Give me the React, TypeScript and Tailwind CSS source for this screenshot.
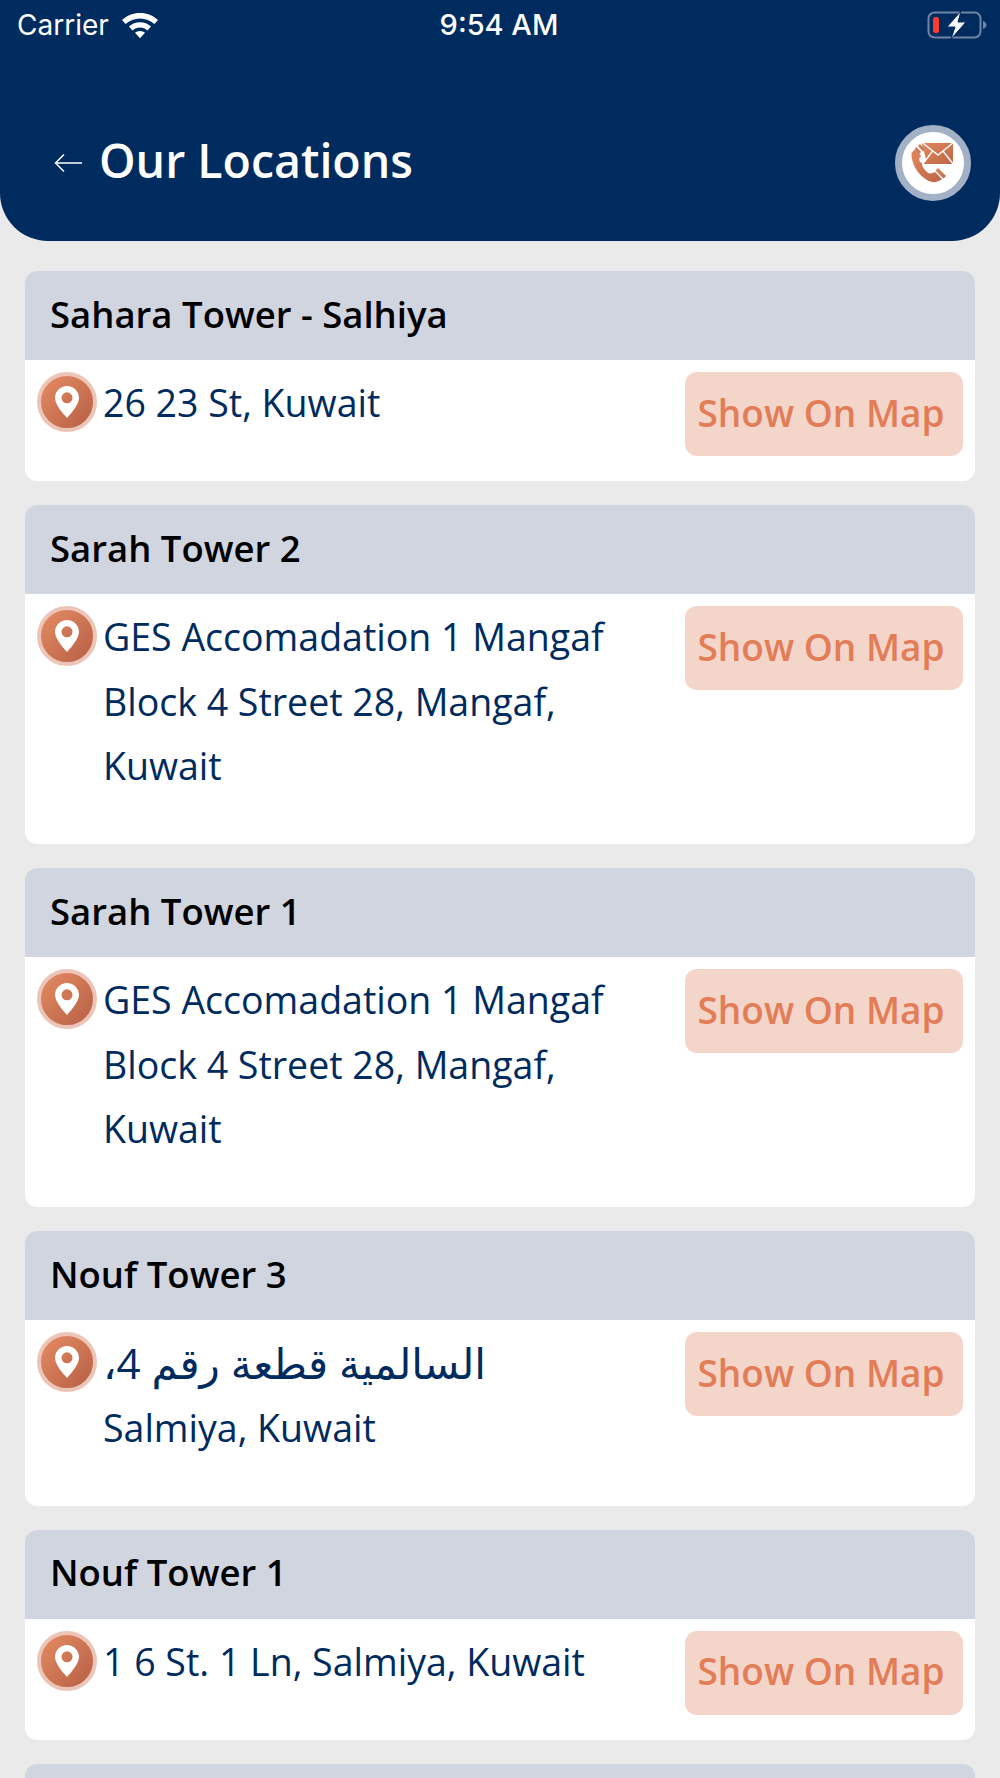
const locations = [
  { id: 1, name: "Sahara Tower - Salhiya", address: ["26 23 St, Kuwait"] },
  { id: 2, name: "Sarah Tower 2", address: ["GES Accomadation 1 Mangaf", "Block 4 Street 28, Mangaf,", "Kuwait"] },
  { id: 3, name: "Sarah Tower 1", address: ["GES Accomadation 1 Mangaf", "Block 4 Street 28, Mangaf,", "Kuwait"] },
  { id: 4, name: "Nouf Tower 3", arabic: "\u0627\u0644\u0633\u0627\u0644\u0645\u064A\u0629 \u0642\u0637\u0639\u0629 \u0631\u0642\u0645 4\u060C", address: ["Salmiya, Kuwait"] },
  { id: 5, name: "Nouf Tower 1", address: ["1 6 St. 1 Ln, Salmiya, Kuwait"] },
];

function WifiIcon() {
  return (
    <svg width="38" height="28" viewBox="0 0 38 28" fill="white">
      <path d="M19 2C12 2 6 4.600 1 9l3.600 4C8.600 9.500 13.500 7.400 19 7.400S29.400 9.500 33.400 13L37 9C32 4.600 26 2 19 2Z" />
      <path d="M19 11.200c-4.200 0-8 1.600-11 4.200l3.600 4c2-1.700 4.600-2.800 7.400-2.800s5.400 1.100 7.400 2.800l3.600-4c-3-2.600-6.800-4.200-11-4.200Z" />
      <path d="M19 20c-2 0-3.600.7-5 1.800l5 5.400 5-5.400C22.600 20.700 21 20 19 20Z" />
    </svg>
  );
}

function BatteryIcon() {
  return (
    <svg width="60" height="28" viewBox="0 0 60 28" fill="none">
      <rect x="1.500" y="1.500" width="52" height="25" rx="6" stroke="#6f85a3" strokeWidth="2" />
      <path d="M56 10c2 .6 3.500 2.200 3.500 4s-1.500 3.400-3.500 4Z" fill="#6f85a3" />
      <rect x="6" y="6" width="6" height="16" rx="2.500" fill="#ff3b30" />
      <path d="M34 0 20 16h8l-4 12 15-17h-8l3-11Z" fill="white" stroke="#002b5e" strokeWidth="1" />
    </svg>
  );
}

function ContactIcon() {
  return (
    <div className="w-[76px] h-[76px] rounded-full bg-white border-[7px] border-[#a3b1c6] flex items-center justify-center">
      <svg width="44" height="44" viewBox="0 0 44 44">
        <defs>
          <linearGradient id="contact" x1="0" y1="0" x2="1" y2="1">
            <stop offset="0" stopColor="#e2875f" />
            <stop offset="1" stopColor="#bd6546" />
          </linearGradient>
        </defs>
        {/* handset */}
        <path d="M5 7 .5 12C0 22 6 33 16 39c5 3 10 3 15-1l-7-7c-4 2-7 2-9-1-3-3-4-5-4-8l-2-1-1-3 2-3Z" fill="url(#contact)" />
        <path d="M27 27l8 8-2.500 2.500-8-8Z" fill="url(#contact)" />
        <path d="M9 3l5 5.500-2 2L7 5ZM5.500 6l4.500 5-1.500 1.500L4 7.500Z" fill="url(#contact)" />
        {/* envelope */}
        <path d="M10.500 2H42v21H11.500L15 18Z" fill="url(#contact)" />
        <path d="M11 1.500 27 14 42.500 1.500M11.500 23.500 22 9.500M42.500 23.500 32 10" fill="none" stroke="white" strokeWidth="1.400" />
      </svg>
    </div>
  );
}

function PinBadge() {
  return (
    <div className="w-[60px] h-[60px] shrink-0 rounded-full border-4 border-[#edc5b8] bg-gradient-to-br from-[#e58b63] to-[#b65f45] flex items-center justify-center">
      <svg width="24" height="32" viewBox="0 0 24 32">
        <path
          fillRule="evenodd"
          d="M12 0C5.400 0 0 5.200 0 11.800 0 18 6.500 26 12 32c5.500-6 12-14 12-20.200C24 5.200 18.600 0 12 0Zm0 6.300a5.500 5.500 0 1 1 0 11 5.500 5.500 0 0 1 0-11Z"
          fill="white"
        />
      </svg>
    </div>
  );
}

export default function App() {
  return (
    <main className="h-[1778px] overflow-hidden bg-[#eaeaea] font-['Open_Sans','DejaVu_Sans',sans-serif]">
      <header className="h-[241px] bg-[#002b5e] rounded-b-[48px] text-white">
        <div className="h-[50px] pl-[17px] pr-[13px] flex items-center justify-between font-['Inter',sans-serif]">
          <div className="w-[300px] flex items-center gap-[12px] text-[28px]">
            <span>Carrier</span>
            <WifiIcon />
          </div>
          <span className="font-medium text-[29px] -ml-[6px]">9:54 AM</span>
          <div className="w-[300px] flex justify-end">
            <BatteryIcon />
          </div>
        </div>
        <div className="mt-[75px] pl-[54px] pr-[29px] flex items-center justify-between">
          <div className="flex items-center gap-[17px]">
            <svg width="28" height="20" viewBox="0 0 28 20" fill="none" stroke="white" strokeWidth="1.500">
              <path d="M28 10H2M10 1.500 1.500 10l8.500 8.500" />
            </svg>
            <h1 className="text-[46.500px] leading-[60px] font-semibold pb-[6px]">Our Locations</h1>
          </div>
          <ContactIcon />
        </div>
      </header>

      <div className="mt-[30px] mx-[25px] flex flex-col gap-[24px]">
        {locations.map((location) => (
          <section key={location.id} className="bg-white rounded-[12px] overflow-hidden shrink-0">
            <div className="h-[89px] bg-[#d1d5e0] pl-[25px] pb-[3px] flex items-center text-[36.500px] font-[550] text-black">
              {location.name}
            </div>
            <div className="flex items-start pl-[12px] pr-[12px] pt-[12px]">
              <PinBadge />
              <div className="flex-1 ml-[6px] -mt-[1px] pb-[45.500px] text-[37.500px] leading-[64.500px] text-[#002b5e]">
                {location.arabic && (
                  <div dir="rtl" className="text-left text-[42px]">
                    {location.arabic}
                  </div>
                )}
                {location.address.map((line) => (
                  <div key={line}>{line}</div>
                ))}
              </div>
              <button className="w-[278px] h-[84px] pb-[3px] pr-[6px] rounded-[12px] bg-[#f4d5ca] text-[#e27d57] text-[37px] font-[550] text-center">
                Show On Map
              </button>
            </div>
          </section>
        ))}
        <section className="h-[89px] bg-[#d1d5e0] rounded-[12px] shrink-0" />
      </div>
    </main>
  );
}
